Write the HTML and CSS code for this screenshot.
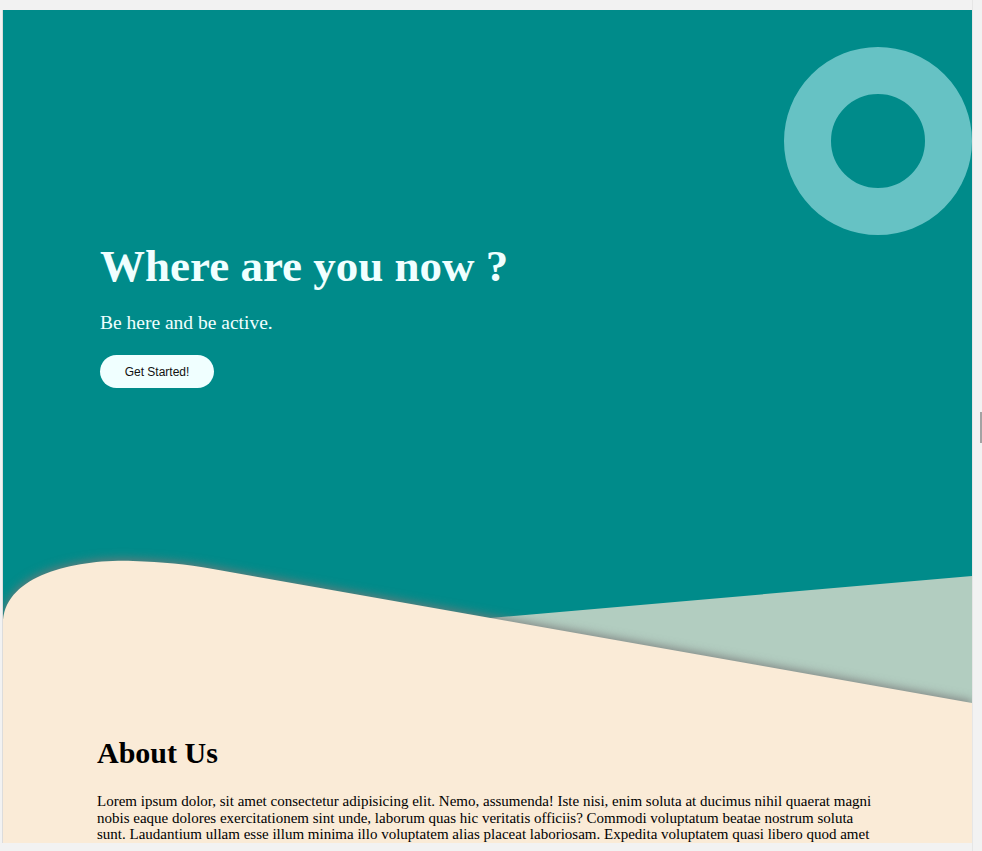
FILE: index.html
```html
<!DOCTYPE html>
<html lang="en">
<head>
<meta charset="utf-8">
<title>Where are you now ?</title>
<link rel="stylesheet" href="styles.css">
</head>
<body>
<div class="frame">
  <section class="hero">
    <div class="ring"></div>
    <div class="hero-content">
      <h1 class="hero-title">Where are you now ?</h1>
      <p class="hero-sub">Be here and be active.</p>
      <button class="hero-btn">Get Started!</button>
    </div>
    <svg class="wave" viewBox="0 0 969 150" preserveAspectRatio="none" aria-hidden="true">
      <path class="wave-sage" d="M400,71.6 L969,22 L969,150 L400,150 Z"/>
      <path class="wave-beige" d="M0,160 L0,70 C0,22 70,5 130,7 C160,8 182,10 210,15 L969,149 L969,160 Z"/>
    </svg>
  </section>
  <section class="about">
    <h2 class="about-title">About Us</h2>
    <p class="about-text">Lorem ipsum dolor, sit amet consectetur adipisicing elit. Nemo, assumenda! Iste nisi, enim soluta at ducimus nihil quaerat magni nobis eaque dolores exercitationem sint unde, laborum quas hic veritatis officiis? Commodi voluptatum beatae nostrum soluta sunt. Laudantium ullam esse illum minima illo voluptatem alias placeat laboriosam. Expedita voluptatem quasi libero quod amet incidunt, dolorum nemo consequuntur odit ut, aliquid rerum, vitae minus.</p>
  </section>
</div>
<div class="scroll">
  <div class="scroll-thumb"></div>
</div>
</body>
</html>
```
FILE: styles.css
```css
html, body {
  margin: 0;
  padding: 0;
}
body {
  background: #f2f2f2;
  display: flex;
  align-items: flex-start;
  height: 851px;
  overflow: hidden;
}
.frame {
  margin-top: 10px;
  margin-left: 2px;
  border-left: 1px solid #dcdcdc;
  width: 969px;
  height: 833px;
  overflow: hidden;
  flex: none;
  font-family: "Liberation Serif", "Times New Roman", serif;
}
.hero {
  position: relative;
  background: #008b8a;
  height: 694px;
  overflow: hidden;
  display: flex;
  flex-direction: column;
  justify-content: space-between;
}
.ring {
  position: absolute;
  top: 37px;
  right: 0;
  width: 94px;
  height: 94px;
  border-radius: 50%;
  border: 47px solid #66c2c4;
}
.hero-content {
  padding: 230px 0 0 97px;
}
.hero-title {
  margin: 0;
  font-size: 45px;
  font-weight: bold;
  line-height: 52px;
  color: #f0ffff;
}
.hero-sub {
  margin: 20px 0 0;
  font-size: 19.5px;
  line-height: 22px;
  color: #f0ffff;
}
.hero-btn {
  margin-top: 21px;
  width: 114px;
  height: 33px;
  border: none;
  border-radius: 17px;
  background: #f0ffff;
  font-family: "Liberation Sans", Arial, sans-serif;
  font-size: 12px;
  color: #111;
  padding: 0;
}
.wave {
  display: block;
  width: 969px;
  height: 150px;
  overflow: visible;
}
.wave-sage {
  fill: #b2cdc0;
}
.wave-beige {
  fill: #faebd7;
  filter: drop-shadow(0 -2px 5px rgba(120, 120, 120, 0.85));
}
.about {
  background: #faebd7;
  padding: 32px 97px 40px 94px;
  height: 400px;
}
.about-title {
  margin: 0;
  font-size: 30px;
  font-weight: bold;
  line-height: 33px;
  color: #000;
}
.about-text {
  margin: 24px 0 0;
  font-size: 15px;
  line-height: 16.5px;
  color: #000;
}
.scroll {
  width: 10px;
  height: 851px;
  border-left: 1px solid #e6e6e6;
  flex: none;
}
.scroll-thumb {
  margin-top: 412px;
  margin-left: 7px;
  width: 3px;
  height: 31px;
  background: #a3a3a3;
}
```
